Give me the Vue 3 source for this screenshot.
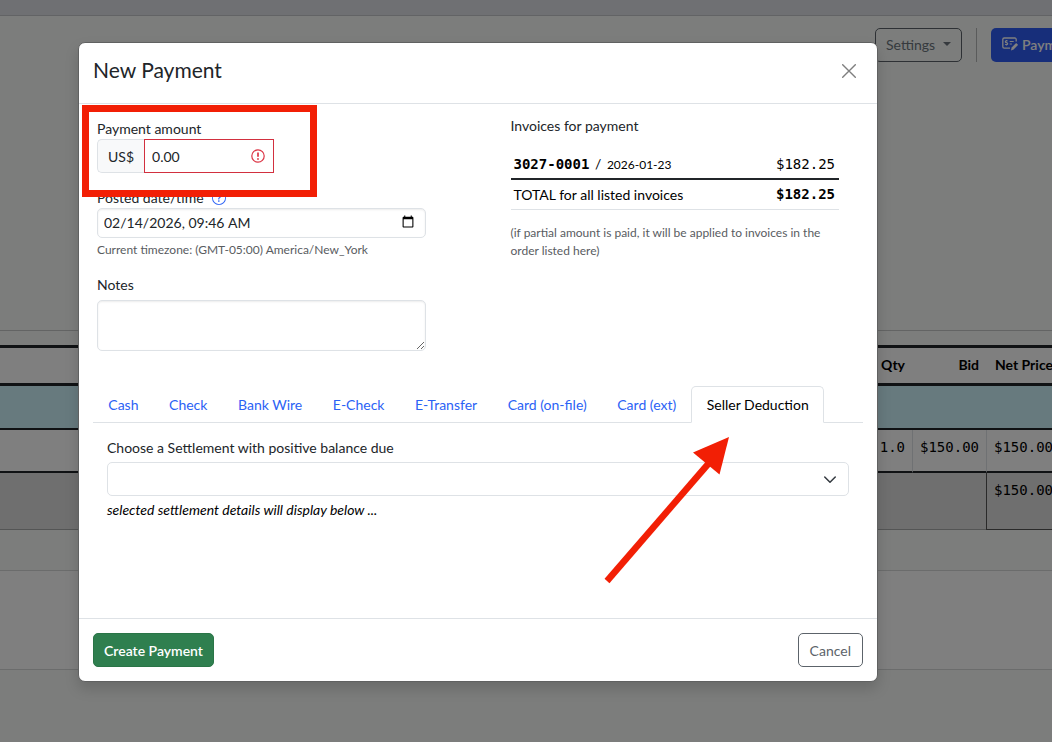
<script setup>
import { ref } from 'vue'

const amount = ref('0.00')
const postedAt = ref('2026-02-14T09:46')
const notes = ref('')
const settlement = ref('')
const activeTab = ref('Seller Deduction')
const tabs = [
  'Cash',
  'Check',
  'Bank Wire',
  'E-Check',
  'E-Transfer',
  'Card (on-file)',
  'Card (ext)',
  'Seller Deduction',
]
</script>

<template>
  <div class="screen">
    <div class="page" inert>
      <div class="navbar"></div>
      <div class="toolbar">
        <button type="button" class="btn btn-outline">
          Settings
          <svg class="caret" viewBox="0 0 8 4" aria-hidden="true"><path d="M0 0h8L4 4z" /></svg>
        </button>
        <span class="divider"></span>
        <button type="button" class="btn btn-primary">
          <svg class="pay-icon" viewBox="0 0 16 14" fill="none" stroke="currentColor" aria-hidden="true">
            <path d="M8 11.2H2.2A1.4 1.4 0 0 1 .8 9.800V2.400A1.400 1.400 0 0 1 2.200 1h10.600a1.400 1.400 0 0 1 1.400 1.400V4.500" stroke-width="1.300" />
            <path d="M5.600 4.100C5.200 3.700 3.300 3.500 3.300 4.700c0 1.300 2.400.7 2.400 2 0 1.200-2 1-2.500.5M4.500 3v1M4.500 7.500v1M7.700 4.500h4M7.700 7h2.200" stroke-width="1.200" />
            <path d="M9 13.400l.6-3 4.500-4.500 2 2-4.500 4.500z" fill="currentColor" stroke="none" />
          </svg>
          Payment
        </button>
      </div>
      <table class="lots">
        <colgroup>
          <col />
          <col class="c-qty" />
          <col class="c-money" />
          <col class="c-money" />
        </colgroup>
        <thead>
          <tr><th></th><th>Qty</th><th>Bid</th><th>Net Price</th></tr>
        </thead>
        <tbody>
          <tr class="group"><td colspan="4"></td></tr>
          <tr class="item"><td></td><td>1.0</td><td>$150.00</td><td>$150.00</td></tr>
          <tr class="sum"><td colspan="3"></td><td>$150.00</td></tr>
        </tbody>
      </table>
      <div class="panel"></div>
    </div>
    <div class="backdrop"></div>

    <form class="modal" role="dialog" aria-labelledby="modal-title" @submit.prevent>
      <header class="modal-header">
        <h1 id="modal-title">New Payment</h1>
        <button type="button" class="close" aria-label="Close">
          <svg viewBox="0 0 14 14" aria-hidden="true"><path d="M.7.7l12.600 12.600M13.300.7L.7 13.300" /></svg>
        </button>
      </header>

      <div class="modal-body">
        <div class="columns">
          <div class="fields">
            <label for="amount">Payment amount</label>
            <div class="amount-group">
              <span class="prefix">US$</span>
              <div class="amount-box">
                <input id="amount" v-model="amount" type="text" aria-invalid="true" />
                <svg class="alert" viewBox="0 0 14 14" fill="none" stroke="currentColor" aria-hidden="true">
                  <circle cx="7" cy="7" r="6.200" stroke-width="1.200" />
                  <path d="M7 3.400v4.400" stroke-width="1.700" />
                  <circle cx="7" cy="10" r=".9" fill="currentColor" stroke="none" />
                </svg>
              </div>
            </div>

            <div class="label-row">
              <label for="posted">Posted date/time</label>
              <svg class="help-icon" viewBox="0 0 16 16" fill="currentColor" aria-hidden="true">
                <path d="M8 15A7 7 0 1 1 8 1a7 7 0 0 1 0 14m0 1A8 8 0 1 0 8 0a8 8 0 0 0 0 16" />
                <path d="M5.255 5.786a.237.237 0 0 0 .241.247h.825c.138 0 .248-.113.266-.25.090-.656.540-1.134 1.342-1.134.686 0 1.314.343 1.314 1.168 0 .635-.374.927-.965 1.371-.673.489-1.206 1.060-1.168 1.987l.003.217a.25.25 0 0 0 .25.246h.811a.25.25 0 0 0 .25-.25v-.105c0-.718.273-.927 1.010-1.486.609-.463 1.244-.977 1.244-2.056 0-1.511-1.276-2.241-2.673-2.241-1.267 0-2.655.590-2.750 2.286m1.557 5.763c0 .533.425.927 1.010.927.609 0 1.028-.394 1.028-.927 0-.552-.420-.940-1.029-.940-.584 0-1.009.388-1.009.940" />
              </svg>
            </div>
            <input id="posted" v-model="postedAt" class="control posted" type="datetime-local" />
            <p class="hint">Current timezone: (GMT-05:00) America/New_York</p>

            <label class="notes-label" for="notes">Notes</label>
            <textarea id="notes" v-model="notes" class="control notes"></textarea>
          </div>

          <div class="invoices">
            <h2>Invoices for payment</h2>
            <table>
              <tbody>
                <tr>
                  <td><b class="mono">3027-0001</b> <span class="slash">/</span> <span class="date">2026-01-23</span></td>
                  <td class="mono">$182.25</td>
                </tr>
                <tr class="total">
                  <td>TOTAL for all listed invoices</td>
                  <td class="mono"><b>$182.25</b></td>
                </tr>
              </tbody>
            </table>
            <p class="hint">(if partial amount is paid, it will be applied to invoices in the order listed here)</p>
          </div>
        </div>

        <div class="tabs" role="tablist">
          <button
            v-for="tab in tabs"
            :key="tab"
            type="button"
            role="tab"
            :aria-selected="tab === activeTab"
            :class="['tab', { active: tab === activeTab }]"
            @click="activeTab = tab"
          >{{ tab }}</button>
        </div>

        <div class="tab-pane">
          <label for="settlement">Choose a Settlement with positive balance due</label>
          <div class="select-wrap">
            <select id="settlement" v-model="settlement" class="control">
              <option value=""></option>
            </select>
            <svg class="chevron" viewBox="0 0 16 16" aria-hidden="true"><path d="M1 4l7 7 7-7" /></svg>
          </div>
          <em>selected settlement details will display below ...</em>
        </div>
      </div>

      <footer class="modal-footer">
        <button type="submit" class="btn btn-success">Create Payment</button>
        <button type="button" class="btn btn-cancel">Cancel</button>
      </footer>

      <div class="mark-box"></div>
      <svg class="mark-arrow" viewBox="0 0 126 150" aria-hidden="true">
        <path d="M3 145L105 27" stroke="#f21f05" stroke-width="6.500" />
        <path d="M125 1L89 16.500L115.500 38.500z" fill="#f21f05" />
      </svg>
    </form>
  </div>
</template>

<style>
body {
  margin: 0;
}
</style>

<style scoped>
* {
  box-sizing: border-box;
}
.screen {
  position: relative;
  min-height: 100vh;
  overflow: hidden;
  background: #f8fbf9;
  font: 14px/21px Lato, "Liberation Sans", sans-serif;
  color: #212529;
}
button,
input,
textarea,
select {
  font: inherit;
  color: inherit;
}
h1,
h2,
p {
  margin: 0;
  font-weight: 400;
}
.mono {
  font-family: "DejaVu Sans Mono", monospace;
}

/* page behind the dialog */
.navbar {
  height: 16px;
  background: #dee0e6;
  border-bottom: 1px solid #c4c6ca;
}
.toolbar {
  display: flex;
  justify-content: flex-end;
  align-items: flex-start;
  height: 315px;
  padding: 12px 0;
  margin-right: -34px;
  border-bottom: 1px solid #c6c8c8;
}
.btn {
  display: inline-flex;
  align-items: center;
  height: 34px;
  padding: 0 11px;
  border: 1px solid transparent;
  border-radius: 5px;
  white-space: nowrap;
}
.toolbar .btn {
  padding: 0 10px 2px;
}
.btn-outline {
  width: 87px;
  justify-content: space-between;
  background: none;
  border-color: #5c636a;
  color: #6c757d;
}
.caret {
  width: 8px;
  height: 4px;
  fill: currentColor;
}
.divider {
  width: 1px;
  height: 34px;
  margin: 0 14px;
  background: #b4b6b6;
}
.btn-primary {
  width: 95px;
  gap: 4px;
  background: #2f5df5;
  color: #fff;
  font-weight: 600;
}
.pay-icon {
  width: 16px;
  height: 14px;
  flex: none;
}
.lots {
  width: calc(100% + 8px);
  margin-top: 14px;
  table-layout: fixed;
  border-collapse: separate;
  border-spacing: 0;
  background: #fff;
  color: #000;
  text-align: right;
}
.c-qty {
  width: 60px;
}
.c-money {
  width: 74px;
}
.lots th,
.lots td {
  padding: 7px;
  vertical-align: top;
  white-space: nowrap;
}
.lots th {
  height: 41px;
  padding-top: 6px;
  border-top: 3px solid #212529;
  border-bottom: 3px solid #212529;
}
.lots td {
  font-family: "DejaVu Sans Mono", monospace;
}
.group td {
  height: 44px;
  background: #cff4fc;
  border-bottom: 2px solid #212529;
}
.item td {
  height: 43px;
  border-bottom: 2px solid #212529;
}
.item td + td {
  border-left: 1px solid #dee2e6;
}
.item td:nth-child(2) {
  border-left: 0;
}
.sum td {
  height: 57px;
  background: #dedede;
  border-bottom: 1px solid #a8aaaa;
}
.sum td + td {
  border-left: 1px solid #555;
  border-bottom-color: #555;
}
.panel {
  height: 100px;
  margin-top: 40px;
  background: #fff;
  border-top: 1px solid #d6d8d8;
  border-bottom: 1px solid #d6d8d8;
}
.backdrop {
  position: absolute;
  inset: 0;
  background: rgb(0 0 0 / 50%);
}

/* dialog */
.modal {
  position: absolute;
  top: 42px;
  left: 78px;
  right: 174px;
  background: #fff;
  border: 1px solid #606161;
  border-radius: 7px;
  box-shadow: 0 7px 14px rgb(0 0 0 / 15%);
}
.modal-header {
  display: flex;
  justify-content: space-between;
  align-items: flex-start;
  height: 61px;
  padding: 13px 14px;
  border-bottom: 1px solid #dee2e6;
}
.modal-header h1 {
  font-size: 21px;
  line-height: 28px;
}
.close {
  display: flex;
  padding: 8px 7px;
  border: 0;
  background: none;
}
.close svg {
  width: 14px;
  height: 14px;
  fill: none;
  stroke: #7f7f7f;
  stroke-width: 1.400;
  stroke-linecap: round;
}
.modal-body {
  height: 514px;
  padding: 11px 14px 0;
}
.columns {
  display: grid;
  grid-template-columns: 1fr 1fr;
  gap: 85px;
  height: 271px;
  padding: 0 24px 0 4px;
}
.fields {
  display: flex;
  flex-direction: column;
  padding-top: 4px;
}
.fields label {
  line-height: 20px;
}
.amount-group {
  display: flex;
  width: 177px;
  height: 34px;
}
.prefix {
  display: flex;
  align-items: center;
  padding: 0 10px;
  background: #f8f9fa;
  border: 1px solid #dee2e6;
  border-right: 0;
  border-radius: 5px 0 0 5px;
}
.amount-box {
  position: relative;
  flex: 1;
}
.amount-box input {
  width: 100%;
  height: 100%;
  padding: 0 30px 0 7px;
  border: 1px solid #d2303f;
  border-radius: 0;
  background: #fff;
}
.alert {
  position: absolute;
  top: 10px;
  right: 9px;
  width: 14px;
  height: 14px;
  color: #dc3545;
}
.label-row {
  display: flex;
  align-items: center;
  gap: 8px;
  margin-top: 15px;
}
.help-icon {
  width: 14px;
  height: 14px;
  color: #2b62f5;
}
.control {
  display: block;
  width: 100%;
  border: 1px solid #dee2e6;
  border-radius: 5px;
  background: #fff;
  box-shadow: inset 0 1px 2px rgb(0 0 0 / 8%);
}
.posted {
  height: 30px;
  padding: 0 8px 2px 6px;
}
.posted::-webkit-datetime-edit-month-field,
.posted::-webkit-datetime-edit-day-field,
.posted::-webkit-datetime-edit-year-field,
.posted::-webkit-datetime-edit-hour-field,
.posted::-webkit-datetime-edit-minute-field,
.posted::-webkit-datetime-edit-ampm-field {
  padding: 0;
}
.hint {
  font-size: 12px;
  line-height: 18px;
  color: #595c5f;
}
.fields .hint {
  margin-top: 3px;
}
.notes-label {
  margin-top: 16px;
}
.notes {
  height: 51px;
  margin-top: 5px;
  padding: 5px 10px;
  resize: vertical;
}
.invoices h2 {
  font-size: 14px;
  line-height: 21px;
}
.invoices table {
  width: 100%;
  margin: 14px 0;
  border-collapse: separate;
  border-spacing: 0;
  color: #000;
}
.invoices td {
  height: 30px;
  padding: 3px;
  border-bottom: 2px solid #212529;
}
.invoices td:last-child {
  padding-right: 4px;
  text-align: right;
}
.invoices .total td {
  border-bottom: 1px solid #dee2e6;
}
.slash {
  margin: 0 2px;
}
.date {
  font-size: 12px;
}
.tabs {
  display: flex;
  height: 37px;
  padding-right: 39px;
  border-bottom: 1px solid #dee2e6;
}
.tab {
  flex: 1 0 auto;
  height: 37px;
  padding: 0 14px;
  border: 1px solid transparent;
  border-radius: 5px 5px 0 0;
  background: none;
  color: #2b62f5;
  white-space: nowrap;
}
.tab.active {
  border-color: #dee2e6;
  border-bottom-color: #fff;
  background: #fff;
  color: #000;
}
.tab-pane {
  padding: 14px 14px 0;
}
.tab-pane label {
  display: block;
}
.select-wrap {
  position: relative;
  margin: 4px 0 3px;
}
.select-wrap select {
  height: 34px;
  appearance: none;
  box-shadow: none;
}
.chevron {
  position: absolute;
  top: 12px;
  right: 13px;
  width: 12px;
  height: 12px;
  fill: none;
  stroke: #343a40;
  stroke-width: 2;
  stroke-linecap: round;
  stroke-linejoin: round;
}
.tab-pane em {
  color: #000;
}
.modal-footer {
  display: flex;
  justify-content: space-between;
  padding: 14px;
  border-top: 1px solid #dee2e6;
}
.btn-success {
  padding: 0 10px;
  background: #2f7f4f;
  border-color: #2a7547;
  color: #fff;
  font-weight: 600;
}
.btn-cancel {
  background: #fff;
  border-color: #5c636a;
  color: #5c636a;
}

/* callouts over the dialog */
.mark-box {
  position: absolute;
  top: 62px;
  left: 3px;
  width: 235px;
  height: 92px;
  border: 7px solid #f21f05;
  pointer-events: none;
}
.mark-arrow {
  position: absolute;
  top: 393px;
  left: 525px;
  width: 126px;
  height: 150px;
  pointer-events: none;
}
</style>
